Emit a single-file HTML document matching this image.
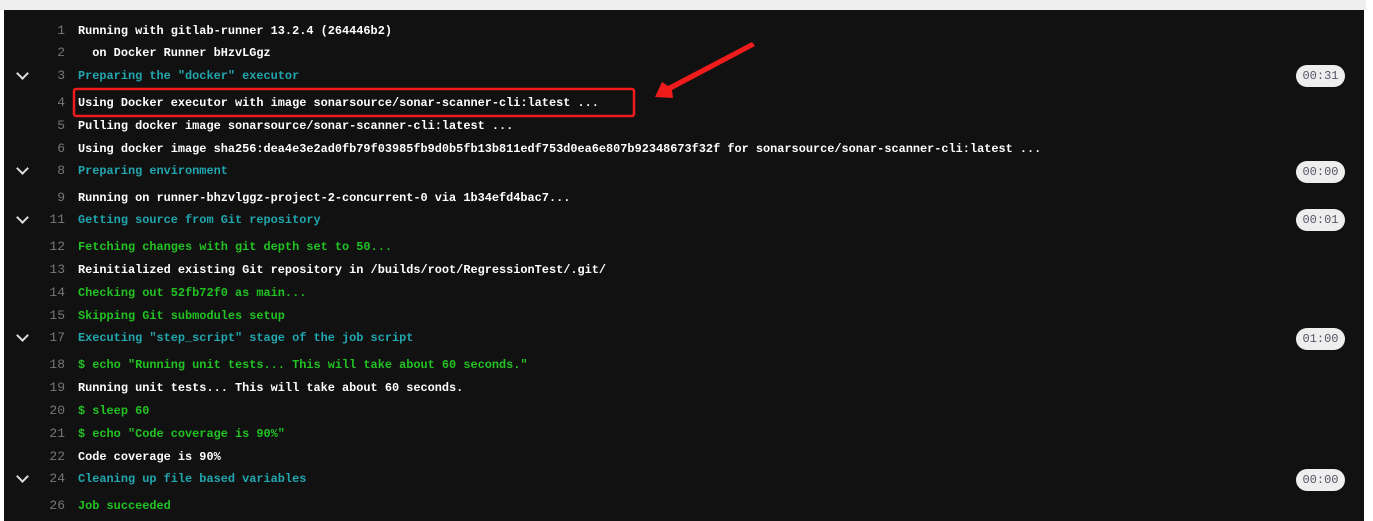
<!DOCTYPE html>
<html><head><style>
body{margin:0;width:1373px;height:521px;background:#fff;position:relative;overflow:hidden;font-family:"Liberation Mono",monospace;}
.top{position:absolute;left:0;top:0;width:1366px;height:10px;background:#efefef;}
.dark{position:absolute;left:4px;top:10px;width:1360px;height:511px;background:#111;}
.l{position:absolute;left:0;height:20px;line-height:20px;font-size:11.9px;font-weight:bold;white-space:pre;color:#fff;margin-top:1px;}
.n{position:absolute;left:30px;width:35px;text-align:right;color:#777;font-weight:normal;font-size:13px;}
.t{position:absolute;left:78px;}
.c{color:#21a7b0}.g{color:#22c322}
.ch{position:absolute;left:18px;top:3px;width:7px;height:7px;border-right:2px solid #ddd;border-bottom:2px solid #ddd;transform:rotate(45deg);}
.b{position:absolute;left:1296px;width:49px;height:22px;border-radius:11px;background:#eee;color:#556;font-size:12px;text-align:center;line-height:22px;font-weight:normal;font-family:"Liberation Mono",monospace;}
</style></head><body>
<div class="top"></div><div class="dark"></div>
<div class="l" style="top:20px"><span class="n">1</span><span class="t">Running with gitlab-runner 13.2.4 (264446b2)</span></div>
<div class="l" style="top:42px"><span class="n">2</span><span class="t">  on Docker Runner bHzvLGgz</span></div>
<div class="l" style="top:65px"><span class="ch"></span><span class="n">3</span><span class="t c">Preparing the "docker" executor</span></div>
<div class="b" style="top:65px">00:31</div>
<div class="l" style="top:92px"><span class="n">4</span><span class="t">Using Docker executor with image sonarsource/sonar-scanner-cli:latest ...</span></div>
<div class="l" style="top:115px"><span class="n">5</span><span class="t">Pulling docker image sonarsource/sonar-scanner-cli:latest ...</span></div>
<div class="l" style="top:138px"><span class="n">6</span><span class="t">Using docker image sha256:dea4e3e2ad0fb79f03985fb9d0b5fb13b811edf753d0ea6e807b92348673f32f for sonarsource/sonar-scanner-cli:latest ...</span></div>
<div class="l" style="top:160px"><span class="ch"></span><span class="n">8</span><span class="t c">Preparing environment</span></div>
<div class="b" style="top:161px">00:00</div>
<div class="l" style="top:187px"><span class="n">9</span><span class="t">Running on runner-bhzvlggz-project-2-concurrent-0 via 1b34efd4bac7...</span></div>
<div class="l" style="top:209px"><span class="ch"></span><span class="n">11</span><span class="t c">Getting source from Git repository</span></div>
<div class="b" style="top:209px">00:01</div>
<div class="l" style="top:236px"><span class="n">12</span><span class="t g">Fetching changes with git depth set to 50...</span></div>
<div class="l" style="top:259px"><span class="n">13</span><span class="t">Reinitialized existing Git repository in /builds/root/RegressionTest/.git/</span></div>
<div class="l" style="top:282px"><span class="n">14</span><span class="t g">Checking out 52fb72f0 as main...</span></div>
<div class="l" style="top:305px"><span class="n">15</span><span class="t g">Skipping Git submodules setup</span></div>
<div class="l" style="top:327px"><span class="ch"></span><span class="n">17</span><span class="t c">Executing "step_script" stage of the job script</span></div>
<div class="b" style="top:328px">01:00</div>
<div class="l" style="top:354px"><span class="n">18</span><span class="t g">$ echo "Running unit tests... This will take about 60 seconds."</span></div>
<div class="l" style="top:377px"><span class="n">19</span><span class="t">Running unit tests... This will take about 60 seconds.</span></div>
<div class="l" style="top:400px"><span class="n">20</span><span class="t g">$ sleep 60</span></div>
<div class="l" style="top:423px"><span class="n">21</span><span class="t g">$ echo "Code coverage is 90%"</span></div>
<div class="l" style="top:446px"><span class="n">22</span><span class="t">Code coverage is 90%</span></div>
<div class="l" style="top:468px"><span class="ch"></span><span class="n">24</span><span class="t c">Cleaning up file based variables</span></div>
<div class="b" style="top:469px">00:00</div>
<div class="l" style="top:495px"><span class="n">26</span><span class="t g">Job succeeded</span></div>
<svg style="position:absolute;left:0;top:0" width="1373" height="521">
<rect x="74" y="89" width="560" height="27" rx="2" fill="none" stroke="#f01b1b" stroke-width="2.5"/>
<polygon points="752,42 755,46 672,90 673,98 655,97 662,82 668,86" fill="#f01b1b"/>
</svg>
</body></html>
